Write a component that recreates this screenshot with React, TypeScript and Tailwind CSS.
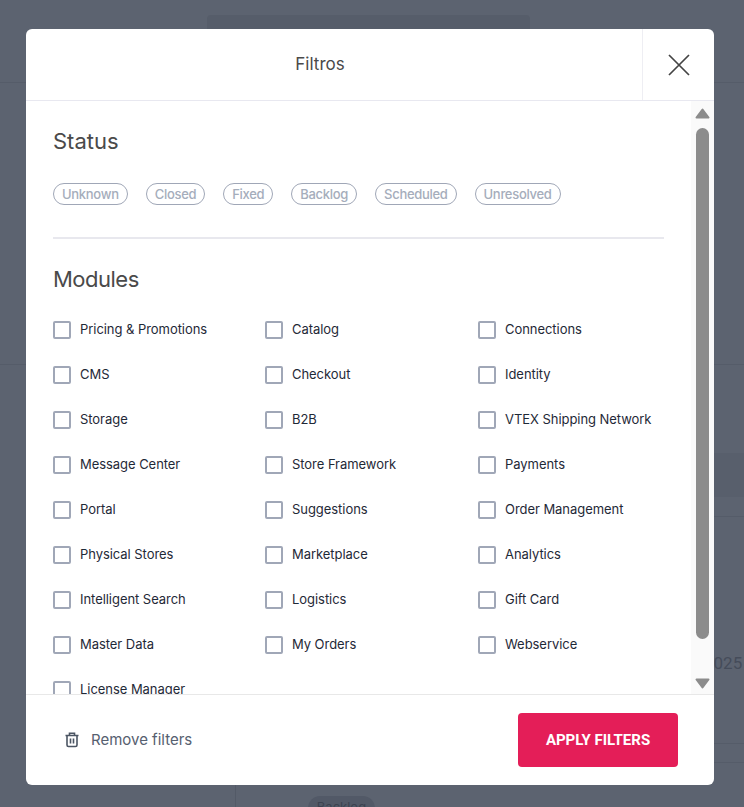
const FONT = "font-['Inter','Liberation_Sans',sans-serif]";

const STATUSES = ["Unknown", "Closed", "Fixed", "Backlog", "Scheduled", "Unresolved"];

const MODULES = [
  ["Pricing & Promotions", "Catalog", "Connections"],
  ["CMS", "Checkout", "Identity"],
  ["Storage", "B2B", "VTEX Shipping Network"],
  ["Message Center", "Store Framework", "Payments"],
  ["Portal", "Suggestions", "Order Management"],
  ["Physical Stores", "Marketplace", "Analytics"],
  ["Intelligent Search", "Logistics", "Gift Card"],
  ["Master Data", "My Orders", "Webservice"],
  ["License Manager"],
];

function Checkbox({ label }: { label: string }) {
  return (
    <label className="flex h-[18px] items-center gap-[9px]">
      <span className="box-border size-[18px] shrink-0 rounded-[2px] border-2 border-[#a0a7b7] bg-white" />
      <span className="-mt-[2px] text-[13px] leading-[18px] tracking-[-0.05px] whitespace-nowrap text-[#1f2937]">{label}</span>
    </label>
  );
}

function Scrollbar() {
  return (
    <div className="flex w-[23px] shrink-0 flex-col items-center bg-[#fafafa] pt-[7px] pb-[5px]">
      <svg width="15" height="11" viewBox="0 0 15 11" className="shrink-0">
        <path d="M7.5 1.5 13.5 9.5H1.5Z" fill="#8c8c8c" stroke="#8c8c8c" strokeWidth="2" strokeLinejoin="round" />
      </svg>
      <div className="mt-[9px] w-[13px] flex-1 rounded-full bg-[#8c8c8c]" />
      <svg width="15" height="11" viewBox="0 0 15 11" className="mt-[39px] shrink-0">
        <path d="M1.5 1.5H13.5L7.5 9.5Z" fill="#8c8c8c" stroke="#8c8c8c" strokeWidth="2" strokeLinejoin="round" />
      </svg>
    </div>
  );
}

// what shows of the page behind the dimmed overlay
function Backdrop() {
  return (
    <>
      <div className="absolute top-[15px] left-[207px] h-[30px] w-[323px] rounded-[4px] bg-[#565d6a]" />
      <div className="absolute top-[82px] left-0 h-px w-full bg-[#555c69]" />
      <div className="absolute top-[364px] left-0 h-px w-full bg-[#555c69]" />
      <div className="absolute top-[453px] right-0 h-[44px] w-[40px] bg-[#585f6c]" />
      <div className="absolute top-[516px] right-0 h-px w-[40px] bg-[#555c69]" />
      <span className="absolute top-[653px] left-[704px] font-['Roboto',sans-serif] text-[17px] leading-[20px] text-[#454c5a]">
        2025
      </span>
      <div className="absolute top-[743px] right-0 h-px w-[40px] bg-[#555c69]" />
      <div className="absolute top-[762px] right-0 h-px w-[40px] bg-[#555c69]" />
      <div className="absolute top-[780px] left-[235px] h-[27px] w-px bg-[#535a67]" />
      <span className="absolute top-[796px] left-[308px] flex h-[24px] w-[67px] justify-center rounded-full bg-[#525967] pt-[2px] text-[13px] text-[#3c4350]">
        Backlog
      </span>
    </>
  );
}

export default function App() {
  return (
    <div className={`${FONT} relative h-[807px] w-[744px] overflow-hidden bg-[#5c6370] pt-[29px] pl-[26px]`}>
      <Backdrop />
      <div className="relative z-10 flex h-[756px] w-[688px] flex-col overflow-hidden rounded-[6px] bg-white">
        <header className="flex h-[72px] shrink-0 border-b border-[#e8e8f0]">
          <div className="flex flex-1 items-center justify-center pr-[28px] text-[17px] text-[#4a4a4a]">Filtros</div>
          <button className="flex w-[72px] items-center justify-center border-l border-[#eeeef3]">
            <svg width="22" height="22" viewBox="0 0 22 22" fill="none" stroke="#444" strokeWidth="1.7">
              <path d="M1 1 21 21M21 1 1 21" />
            </svg>
          </button>
        </header>

        <div className="flex min-h-0 flex-1">
          <div className="min-w-0 flex-1 overflow-hidden pt-[27px] pl-[27px]">
            <h2 className="text-[22px] leading-[26px] text-[#4a4a4a]">Status</h2>
            <div className="mt-[29px] flex gap-[18px]">
              {STATUSES.map((s) => (
                <span
                  key={s}
                  className="flex h-[22px] items-center rounded-full border border-[#a0a7b7] px-[8px] pt-px text-[13px] font-medium tracking-[-0.3px] text-[#a5adbb]"
                >
                  {s}
                </span>
              ))}
            </div>
            <div className="mt-[32px] mr-[27px] h-[2px] bg-[#e8e8ee]" />
            <h2 className="mt-[27px] text-[22px] leading-[26px] tracking-[-0.5px] text-[#4a4a4a]">Modules</h2>
            <div className="mt-[29px] grid grid-cols-[212px_213px_1fr] gap-y-[27px]">
              {MODULES.flat().map((m) => (
                <Checkbox key={m} label={m} />
              ))}
            </div>
          </div>
          <Scrollbar />
        </div>

        <footer className="flex h-[91px] shrink-0 items-center justify-between border-t border-[#e8e8e8] pr-[36px] pl-[38px]">
          <div className="flex items-center gap-[11px] text-[15px] text-[#566070]">
            <svg width="16" height="16" viewBox="0 0 16 16" fill="none" stroke="#4b5563" strokeWidth="1.6">
              <path d="M1.5 3.5H14.5M5.5 3.5V1.2H10.5V3.5M3 3.5V13a1.5 1.5 0 0 0 1.5 1.5H11.5A1.5 1.5 0 0 0 13 13V3.5M6.5 6.5V11.5M9.5 6.5V11.5" />
            </svg>
            Remove filters
          </div>
          <button className="flex h-[54px] w-[160px] items-center justify-center rounded-[4px] bg-[#e41e58] font-['Roboto',sans-serif] text-[15px] font-bold text-white">
            APPLY FILTERS
          </button>
        </footer>
      </div>
    </div>
  );
}
